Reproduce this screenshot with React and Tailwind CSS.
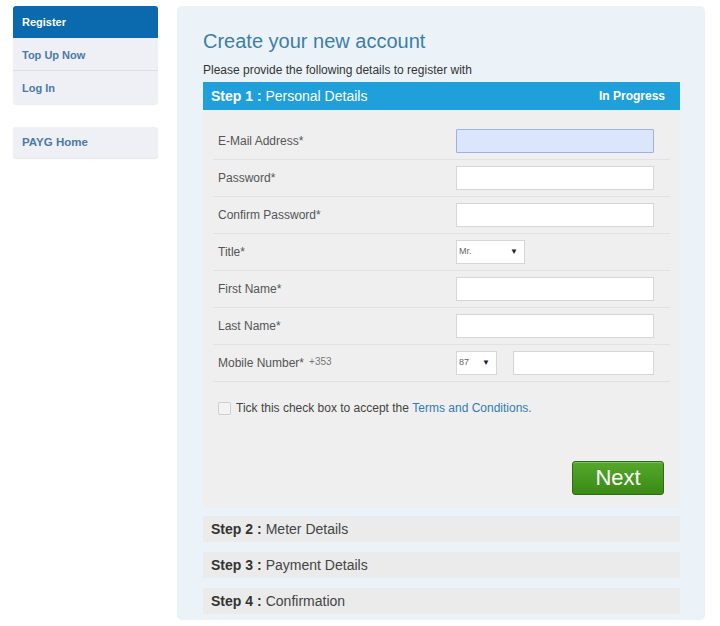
import React from "react";

const fields = [
  { label: "E-Mail Address*", kind: "focus" },
  { label: "Password*", kind: "text" },
  { label: "Confirm Password*", kind: "text" },
  { label: "Title*", kind: "title" },
  { label: "First Name*", kind: "text" },
  { label: "Last Name*", kind: "text" },
  { label: "Mobile Number*", kind: "mobile" },
];

const Select = ({ value, width }) => (
  <div
    className={`${width} h-[24px] bg-white border border-[#d6d6d6] flex items-center justify-between pl-[2px] pr-[6px]`}
  >
    <span className="text-[9px] text-[#666]">{value}</span>
    <span className="text-[8px] text-[#222]">▼</span>
  </div>
);

const Field = ({ field }) => {
  let control;
  if (field.kind === "focus") {
    control = <div className="w-[198px] h-[24px] bg-[#dbe5fb] border border-[#9eb1e1] rounded-[1px]" />;
  } else if (field.kind === "title") {
    control = <Select value="Mr." width="w-[69px]" />;
  } else if (field.kind === "mobile") {
    control = (
      <div className="flex items-center gap-[16px]">
        <Select value="87" width="w-[41px]" />
        <div className="w-[141px] h-[24px] bg-white border border-[#d6d6d6]" />
      </div>
    );
  } else {
    control = <div className="w-[198px] h-[24px] bg-white border border-[#d6d6d6]" />;
  }
  return (
    <div className="h-[37px] flex items-center border-b border-[#e2e2e2]">
      <div className="w-[243px] pl-[5px] text-[12px] text-[#555]">
        {field.label}
        {field.kind === "mobile" && <span className="text-[10px] text-[#777] ml-[5px] align-top">+353</span>}
      </div>
      {control}
    </div>
  );
};

const StepRow = ({ num, title }) => (
  <div className="h-[26px] bg-[#ebebeb] flex items-center pl-[8px] text-[14px] text-[#444]">
    <span className="font-bold text-[#333]">Step {num}</span>
    <span className="font-bold text-[#333] mx-[4px]">:</span>
    {title}
  </div>
);

export default function App() {
  return (
    <div className="w-[720px] h-[626px] bg-white flex items-start gap-[19px] pl-[13px] pt-[6px] font-['Liberation_Sans',Arial,sans-serif] overflow-hidden">
      <div className="w-[145px] flex flex-col">
        <div className="rounded-[3px] overflow-hidden shadow-[0_1px_1px_rgba(0,0,0,0.08)]">
          <div className="h-[32px] bg-[#0b6aad] flex items-center pl-[9px] text-[11px] font-bold text-white">
            Register
          </div>
          <div className="h-[33px] bg-[#eef0f5] flex items-center pl-[9px] pt-[2px] text-[11px] font-bold text-[#4a7aa6] border-b border-[#dcdfe5]">
            Top Up Now
          </div>
          <div className="h-[33px] bg-[#eef0f5] flex items-center pl-[9px] pt-[2px] text-[11px] font-bold text-[#4a7aa6]">
            Log In
          </div>
        </div>
        <div className="mt-[23px] h-[31px] bg-[#eef0f5] rounded-[3px] shadow-[0_1px_1px_rgba(0,0,0,0.1)] flex items-center pl-[9px] pt-[1px] text-[11.5px] font-bold text-[#4a7aa6]">
          PAYG Home
        </div>
      </div>

      <div className="w-[528px] h-[614px] bg-[#ebf3f9] rounded-[5px] pl-[26px] pr-[25px] pt-[23px]">
        <h1 className="text-[20px] leading-[24px] text-[#3c7ea8]">Create your new account</h1>
        <p className="mt-[10px] text-[12px] leading-[14px] text-[#333]">
          Please provide the following details to register with
        </p>
        <div className="mt-[5px] h-[28px] bg-[#1fa0da] flex items-center justify-between pl-[8px] pr-[15px] text-white">
          <span className="text-[14px]">
            <span className="font-bold">Step 1 :</span> Personal Details
          </span>
          <span className="text-[12px] font-bold">In Progress</span>
        </div>
        <div className="bg-[#efefef] pt-[13px] px-[10px] pb-[13px]">
          {fields.map((f) => (
            <Field key={f.label} field={f} />
          ))}
          <div className="mt-[17px] flex items-center pl-[5px] text-[12px] text-[#444]">
            <span className="w-[13px] h-[13px] bg-[#f3f3f3] border border-[#cfcfcf] rounded-[2px] mr-[5px]" />
            Tick this check box to accept the&nbsp;
            <span className="text-[#2f7db0]">Terms and Conditions.</span>
          </div>
          <div className="flex justify-end mt-[44px] pr-[6px]">
            <button className="w-[92px] h-[34px] rounded-[3px] border border-[#2e6c14] bg-gradient-to-b from-[#55a82a] to-[#3a8a15] text-white text-[22px] leading-none shadow-[inset_0_1px_0_rgba(255,255,255,0.25)]">
              Next
            </button>
          </div>
        </div>
        <div className="mt-[8px] flex flex-col gap-[10px]">
          <StepRow num="2" title="Meter Details" />
          <StepRow num="3" title="Payment Details" />
          <StepRow num="4" title="Confirmation" />
        </div>
      </div>
    </div>
  );
}
